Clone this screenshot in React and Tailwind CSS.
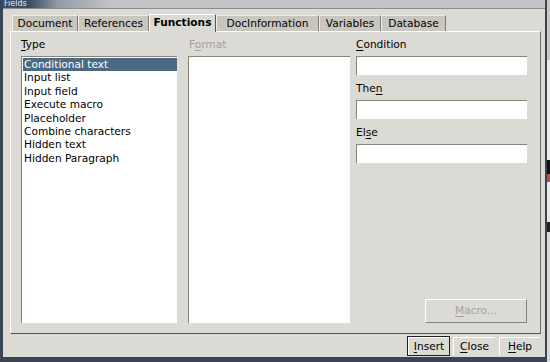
import React from 'react';

const tabs = [
  { label: 'Document', w: 'w-[66px]' },
  { label: 'References', w: 'w-[71px]' },
  { label: 'Functions', w: 'w-[67px]', active: true },
  { label: 'DocInformation', w: 'w-[103px]' },
  { label: 'Variables', w: 'w-[62px]' },
  { label: 'Database', w: 'w-[65px]' },
];

const types = [
  'Conditional text',
  'Input list',
  'Input field',
  'Execute macro',
  'Placeholder',
  'Combine characters',
  'Hidden text',
  'Hidden Paragraph',
];

// label with one underlined mnemonic letter
function Mn({ pre, u, post }) {
  return (
    <>
      {pre}
      <span className="underline underline-offset-[2px]">{u}</span>
      {post}
    </>
  );
}

function Field({ pre, u, post }) {
  return (
    <div className="flex flex-col">
      <div className="h-[13px] leading-[13px] mb-[5px]">
        <Mn pre={pre} u={u} post={post} />
      </div>
      <div className="h-[19px] bg-white border-t border-l border-[#85827c] border-b-[#f4f3f1] border-r-[#f4f3f1]"></div>
    </div>
  );
}

function Button({ children, def, w }) {
  return (
    <div className={`${w} ${def ? 'border border-[#1e1e1e]' : 'border border-transparent'}`}>
      <div className="h-[18px] flex items-center justify-center border-t border-l border-white border-b-[#85827c] border-r-[#85827c] bg-[#dcdad5]">
        {children}
      </div>
    </div>
  );
}

export default function App() {
  return (
    <div className="w-[550px] h-[362px] flex bg-[#e4e4e4] overflow-hidden text-[10.6px] text-black font-['DejaVu_Sans',sans-serif]">
      <div className="w-[547px] h-full flex flex-col bg-[#dcdad5] border-l-[3px] border-r-[2px] border-b-[5px] border-[#394552]">
        {/* title bar */}
        <div className="h-[9px] overflow-hidden bg-linear-to-r from-[#3d4f66] from-5% via-[#8f9aa6] via-10% to-[#c4c4c4] to-20% border-b border-[#8e8e8e]">
          <div className="ml-[1px] text-[8px] leading-[8px] text-[#e3e8ee]">Fields</div>
        </div>

        <div className="flex-1 flex flex-col pl-[7px] pr-[4px] pt-[4px] pb-[1px]">
          {/* tabs */}
          <div className="h-[18px] flex items-end pl-[2px]">
            {tabs.map((t) =>
              t.active ? (
                <div
                  key={t.label}
                  className={`${t.w} h-[18px] -mb-px relative z-10 bg-[#dcdad5] border-t border-l border-white border-r border-r-[#5a5853] flex items-center justify-center font-bold pb-[1px]`}
                >
                  {t.label}
                </div>
              ) : (
                <div
                  key={t.label}
                  className={`${t.w} h-[16px] bg-[#c9c6bf] border-t border-l border-[#eeede9] border-r border-r-[#7d7b76] flex items-center justify-center`}
                >
                  {t.label}
                </div>
              )
            )}
          </div>

          {/* tab page */}
          <div className="h-[303px] flex gap-[11px] pl-[10px] pr-[13px] pt-[6px] pb-[10px] border-t border-l border-white border-r border-r-[#6f6d68] border-b border-b-[#55534f]">
            <div className="w-[156px] flex flex-col">
              <div className="h-[13px] leading-[13px] mb-[5px]">
                <Mn pre="" u="T" post="ype" />
              </div>
              <div className="flex-1 bg-white border-t border-l border-[#85827c] border-b-[#f4f3f1] border-r-[#f4f3f1] pt-px pl-px">
                {types.map((t, i) => (
                  <div
                    key={t}
                    className={`h-[13.4px] leading-[13.4px] pl-[1px] ${i === 0 ? 'bg-[#4b6983] text-white' : ''}`}
                  >
                    {t}
                  </div>
                ))}
              </div>
            </div>

            <div className="w-[162px] flex flex-col">
              <div className="h-[13px] leading-[13px] mb-[5px] text-[#a4a29c] pl-[1px]">
                <Mn pre="F" u="o" post="rmat" />
              </div>
              <div className="flex-1 bg-white border-t border-l border-[#85827c] border-b-[#f4f3f1] border-r-[#f4f3f1]"></div>
            </div>

            <div className="w-[171px] -ml-[5px] flex flex-col gap-[7px]">
              <Field pre="" u="C" post="ondition" />
              <Field pre="The" u="n" post="" />
              <Field pre="El" u="s" post="e" />
              <div className="mt-auto h-[24px] border-t border-l border-white border-b border-r border-b-[#85827c] border-r-[#85827c] flex items-center justify-center text-[#a4a29c] ml-[69px]">
                <Mn pre="" u="M" post="acro..." />
              </div>
            </div>
          </div>

          {/* button row */}
          <div className="flex justify-end gap-[2px] mt-[2px]">
            <Button def w="w-[43px]">
              <Mn pre="" u="I" post="nsert" />
            </Button>
            <Button w="w-[44px]">
              <Mn pre="" u="C" post="lose" />
            </Button>
            <Button w="w-[43px]">
              <Mn pre="" u="H" post="elp" />
            </Button>
          </div>
        </div>
      </div>

      {/* desktop behind the dialog */}
      <div className="flex-1 flex flex-col">
        <div className="h-[60px] bg-[#c8c8c8]"></div>
        <div className="h-[100px] bg-[#ececec]"></div>
        <div className="h-[14px] bg-[#111]"></div>
        <div className="h-[8px] bg-[#c44]"></div>
        <div className="h-[40px] bg-[#e8e8e8]"></div>
        <div className="h-[10px] bg-[#222]"></div>
        <div className="flex-1 bg-[#dadada]"></div>
      </div>
    </div>
  );
}
